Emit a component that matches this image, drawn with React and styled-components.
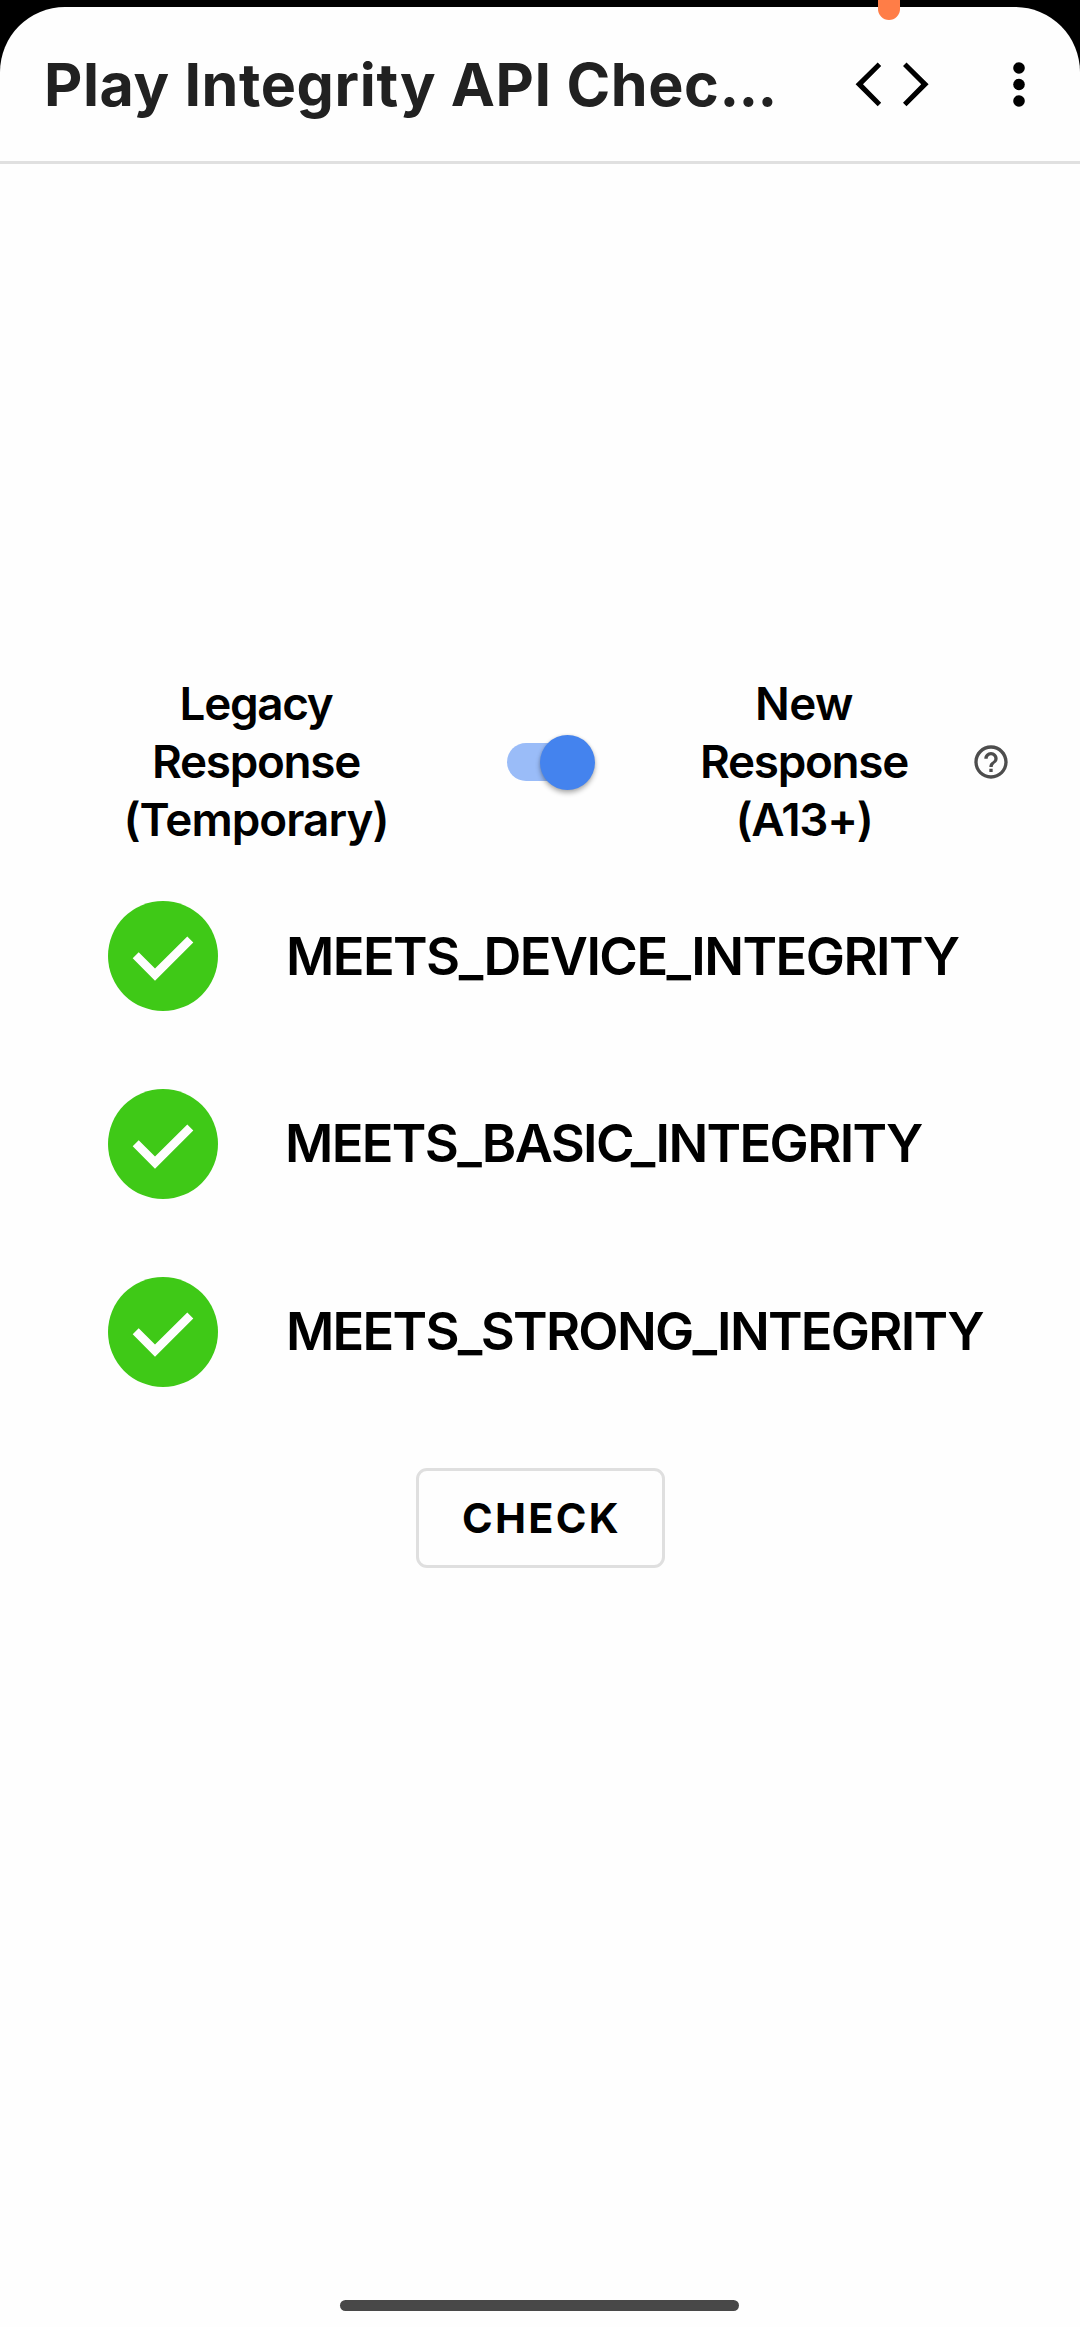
import React from 'react';
import styled, { createGlobalStyle } from 'styled-components';

const GlobalStyle = createGlobalStyle`
  *, *::before, *::after { box-sizing: border-box; }
  body {
    margin: 0;
    background: #000;
    font-family: Inter, "Liberation Sans", sans-serif;
    font-weight: 600;
    color: #000;
  }
`;

const Screen = styled.div`
  position: relative;
  width: 1080px;
  height: 2327px;
  padding-top: 7px;
  overflow: hidden;
  background: #000;
`;

const CameraLight = styled.div`
  position: absolute;
  top: 0;
  left: 878px;
  width: 22px;
  height: 20px;
  border-radius: 0 0 11px 11px;
  background: #ff7d47;
`;

const Surface = styled.div`
  display: flex;
  flex-direction: column;
  height: 2320px;
  border-radius: 65px 65px 0 0;
  overflow: hidden;
  background: #fefefe;
`;

const AppBar = styled.header`
  display: flex;
  align-items: center;
  flex: none;
  height: 157px;
  padding: 1px 44px 0 44px;
  border-bottom: 3px solid #e0e0e0;
`;

const Title = styled.h1`
  margin: 0;
  width: 811px;
  font-size: 59.2px;
  font-weight: 750;
  line-height: 74px;
  letter-spacing: 0.6px;
  white-space: nowrap;
  color: #212121;
`;

const Dots = styled.span`
  letter-spacing: -0.8px;
`;

const IconButton = styled.button`
  display: flex;
  flex: none;
  margin: 0 0 0 ${(p) => p.$gap || 0}px;
  padding: 0;
  border: 0;
  background: none;
  color: #000;
`;

const Content = styled.main`
  display: flex;
  flex-direction: column;
  flex: 1;
  padding-top: 511px;
`;

const ModeRow = styled.div`
  display: flex;
  align-items: center;
  height: 174px;
  padding-left: 106px;
`;

const ModeLabel = styled.div`
  width: 300px;
  font-size: 45.8px;
  line-height: 58px;
  text-align: center;
`;

const Line = styled.div`
  letter-spacing: ${(p) => p.$spacing}px;
  white-space: nowrap;
`;

const Switch = styled.div`
  display: flex;
  align-items: center;
  justify-content: flex-end;
  width: 88px;
  height: 38px;
  margin: 0 59px 0 101px;
  border-radius: 19px;
  background: linear-gradient(#9abcf8, #9abcf8) left / 70px 38px no-repeat;
`;

const Thumb = styled.div`
  width: 55px;
  height: 55px;
  flex: none;
  border-radius: 50%;
  background: #4483ee;
  box-shadow: 0 3px 5px rgba(0, 0, 0, 0.3), 0 0 3px rgba(0, 0, 0, 0.1);
`;

const HelpButton = styled(IconButton)`
  margin-left: 17px;
  color: #4d4d4d;
`;

const Verdicts = styled.ul`
  display: flex;
  flex-direction: column;
  gap: 78px;
  margin: 52px 0 0;
  padding: 0 0 0 108px;
  list-style: none;
`;

const Verdict = styled.li`
  display: flex;
  align-items: center;
  height: 110px;
`;

const Badge = styled.div`
  display: flex;
  width: 110px;
  height: 110px;
  flex: none;
  border-radius: 50%;
  background: #3fc917;
  color: #fefefe;
`;

const VerdictText = styled.div`
  padding: 0 0 ${(p) => p.$lift}px;
  margin-left: ${(p) => p.$indent}px;
  font-size: 52.4px;
  line-height: 64px;
  letter-spacing: ${(p) => p.$spacing}px;
  white-space: nowrap;
`;

const CheckButton = styled.button`
  align-self: center;
  width: 249px;
  height: 100px;
  margin-top: 81px;
  padding: 0 0 0 3px;
  border: 3px solid #dfdfdf;
  border-radius: 11px;
  background: #fefefe;
  color: #000;
  font: 700 41.5px/50px Inter, "Liberation Sans", sans-serif;
  letter-spacing: 2.3px;
`;

const HomeIndicator = styled.div`
  align-self: center;
  width: 399px;
  height: 11px;
  margin: auto 1px 16px 0;
  border-radius: 6px;
  background: #484848;
`;

const verdicts = [
  { name: 'MEETS_DEVICE_INTEGRITY', spacing: -1.56, lift: 0, indent: 68 },
  { name: 'MEETS_BASIC_INTEGRITY', spacing: -1.65, lift: 2, indent: 67 },
  { name: 'MEETS_STRONG_INTEGRITY', spacing: -1.72, lift: 3, indent: 68 },
];

const CodeIcon = () => (
  <svg width="74" height="46" viewBox="0 0 74 46" fill="currentColor">
    <path d="M22.7 0.4 0.6 22.3l22.1 21.9 3.5-3.5L8 22.3 26.2 3.9z" />
    <path d="M51.5 0.4 73.6 22.3l-22.1 21.9-3.5-3.5L66.2 22.3 48 3.9z" />
  </svg>
);

const MoreIcon = () => (
  <svg width="12" height="46" viewBox="0 0 12 46" fill="currentColor">
    <circle cx="6" cy="6" r="5.8" />
    <circle cx="6" cy="22.5" r="5.8" />
    <circle cx="6" cy="39" r="5.8" />
  </svg>
);

const HelpIcon = () => (
  <svg width="40" height="40" viewBox="0 0 24 24" fill="currentColor">
    <path d="M11 18h2v-2h-2v2zm1-16C6.48 2 2 6.48 2 12s4.48 10 10 10 10-4.48 10-10S17.52 2 12 2zm0 18c-4.41 0-8-3.59-8-8s3.59-8 8-8 8 3.59 8 8-3.59 8-8 8zm0-14c-2.21 0-4 1.79-4 4h2c0-1.1.9-2 2-2s2 .9 2 2c0 2-3 1.75-3 5h2c0-2.25 3-2.5 3-5 0-2.21-1.79-4-4-4z" />
  </svg>
);

const CheckIcon = () => (
  <svg width="110" height="110" viewBox="0 0 110 110" fill="currentColor">
    <path d="M24.7 57.3l6-6L47 67.5l32.3-32 6 6L47 79.8z" />
  </svg>
);

export default function App() {
  return (
    <>
      <GlobalStyle />
      <Screen>
        <Surface>
          <AppBar>
            <Title>Play Integrity API Chec<Dots>...</Dots></Title>
            <IconButton aria-label="Source code"><CodeIcon /></IconButton>
            <IconButton aria-label="More options" $gap={84}><MoreIcon /></IconButton>
          </AppBar>
          <Content>
            <ModeRow>
              <ModeLabel>
                <Line $spacing={-1.3}>Legacy</Line>
                <Line $spacing={-1.3}>Response</Line>
                <Line $spacing={-0.95}>(Temporary)</Line>
              </ModeLabel>
              <Switch role="switch" aria-checked="true"><Thumb /></Switch>
              <ModeLabel>
                <Line $spacing={-0.5}>New</Line>
                <Line $spacing={-1.3}>Response</Line>
                <Line $spacing={-1.3}>(A13+)</Line>
              </ModeLabel>
              <HelpButton aria-label="Help"><HelpIcon /></HelpButton>
            </ModeRow>
            <Verdicts>
              {verdicts.map((v) => (
                <Verdict key={v.name}>
                  <Badge><CheckIcon /></Badge>
                  <VerdictText $spacing={v.spacing} $lift={v.lift} $indent={v.indent}>{v.name}</VerdictText>
                </Verdict>
              ))}
            </Verdicts>
            <CheckButton>CHECK</CheckButton>
            <HomeIndicator />
          </Content>
        </Surface>
        <CameraLight />
      </Screen>
    </>
  );
}
